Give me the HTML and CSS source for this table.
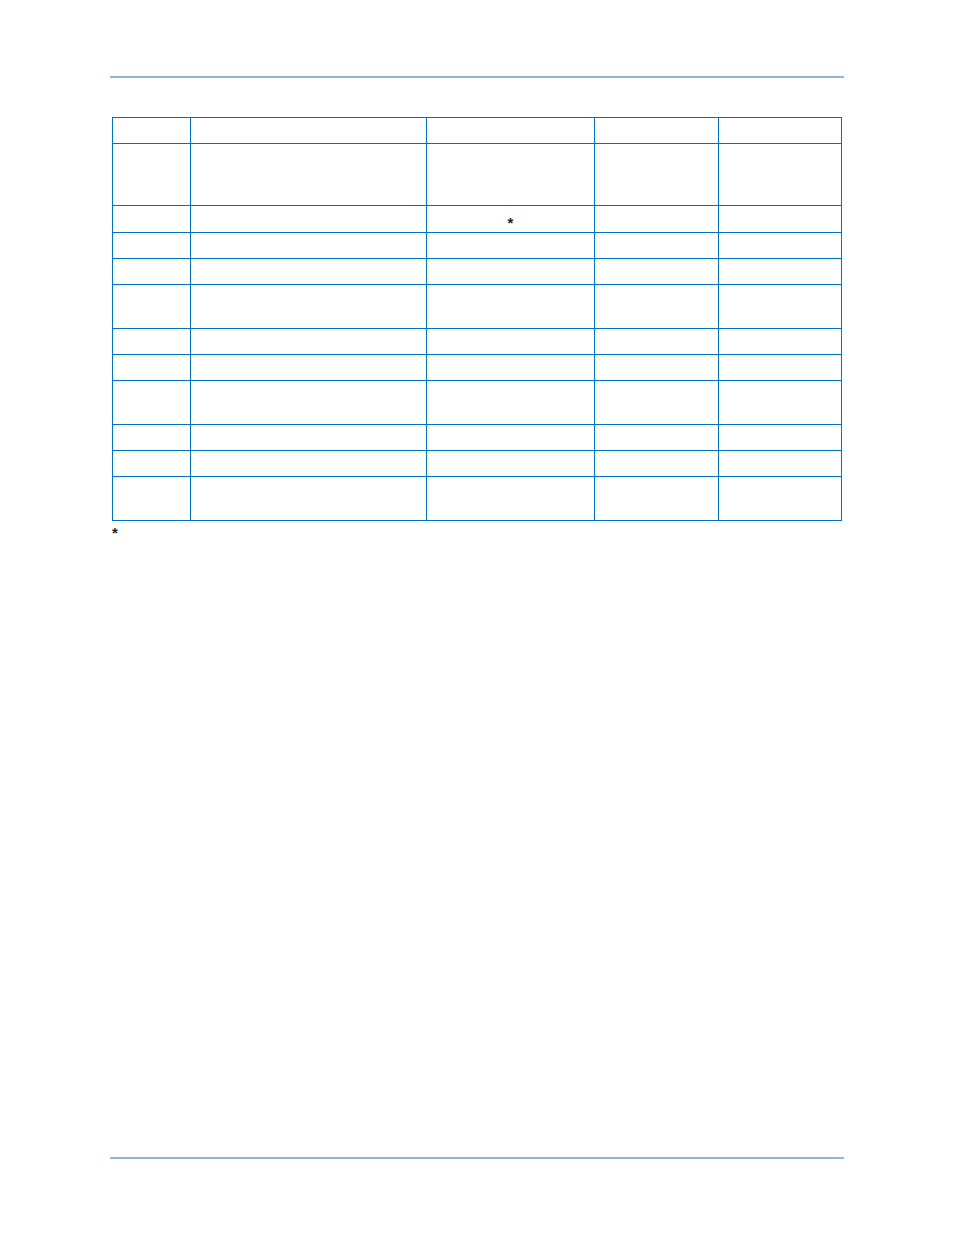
FILE: index.html
```html
<!DOCTYPE html>
<html>
<head>
<meta charset="utf-8">
<link rel="stylesheet" href="styles.css">
</head>
<body>
<div class="page">
  <div class="rule"></div>
  <div class="grid">
    <div class="c r1"></div><div class="c"></div><div class="c"></div><div class="c"></div><div class="c"></div>
    <div class="c"></div><div class="c"></div><div class="c"></div><div class="c"></div><div class="c"></div>
    <div class="c"></div><div class="c"></div><div class="c star">*</div><div class="c"></div><div class="c"></div>
    <div class="c"></div><div class="c"></div><div class="c"></div><div class="c"></div><div class="c"></div>
    <div class="c"></div><div class="c"></div><div class="c"></div><div class="c"></div><div class="c"></div>
    <div class="c"></div><div class="c"></div><div class="c"></div><div class="c"></div><div class="c"></div>
    <div class="c"></div><div class="c"></div><div class="c"></div><div class="c"></div><div class="c"></div>
    <div class="c"></div><div class="c"></div><div class="c"></div><div class="c"></div><div class="c"></div>
    <div class="c"></div><div class="c"></div><div class="c"></div><div class="c"></div><div class="c"></div>
    <div class="c"></div><div class="c"></div><div class="c"></div><div class="c"></div><div class="c"></div>
    <div class="c"></div><div class="c"></div><div class="c"></div><div class="c"></div><div class="c"></div>
    <div class="c"></div><div class="c"></div><div class="c"></div><div class="c"></div><div class="c"></div>
  </div>
  <div class="note">*</div>
  <div class="rule bottom"></div>
</div>
</body>
</html>
```
FILE: styles.css
```css
html, body {
  margin: 0;
  padding: 0;
  background: #ffffff;
}
.page {
  box-sizing: border-box;
  height: 1235px;
  padding: 76px 0 76px 0;
  display: flex;
  flex-direction: column;
  font-family: "Liberation Sans", Arial, sans-serif;
  color: #222222;
}
.rule {
  margin-left: 110px;
  width: 734px;
  height: 2px;
  background: #95b3d7;
  flex: none;
}
.rule.bottom {
  margin-top: auto;
}
.grid {
  margin-top: 39px;
  margin-left: 112px;
  width: 730px;
  box-sizing: border-box;
  display: grid;
  grid-template-columns: 77px 235px 167px 123px 122px;
  grid-template-rows: 25px 61px 26px 25px 25px 43px 25px 25px 43px 25px 25px 43px;
  gap: 1px;
  padding: 1px;
  background: #0070c0;
  flex: none;
}
.c {
  background: #ffffff;
}
.star {
  text-align: center;
  font-size: 15px;
  font-weight: bold;
  line-height: 14px;
  padding-top: 10px;
  box-sizing: border-box;
}
.note {
  margin-left: 112px;
  margin-top: 5px;
  font-size: 15px;
  font-weight: bold;
  line-height: 14px;
  flex: none;
}
```
